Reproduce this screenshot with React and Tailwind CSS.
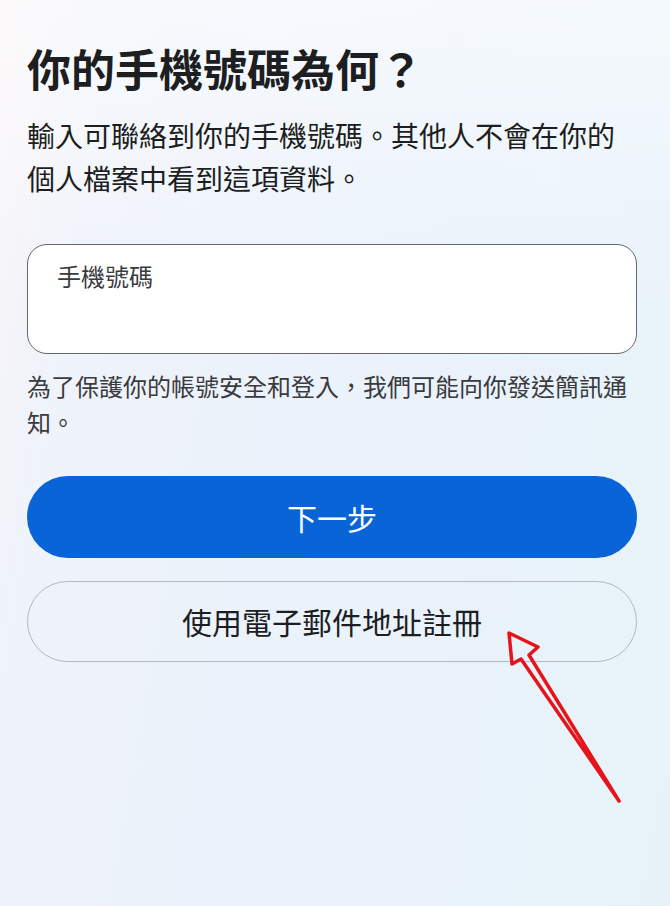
import React from "react";

const Arrow = () => (
  <svg
    className="pointer-events-none absolute left-0 top-0"
    width="670"
    height="906"
    viewBox="0 0 670 906"
  >
    <polygon
      points="509,633 538,647 529,655 619,801 521,659 512,664"
      fill="none"
      stroke="#e5141b"
      strokeWidth="3.5"
      strokeLinejoin="round"
    />
  </svg>
);

const App = () => {
  return (
    <div className="relative h-[906px] w-[670px] overflow-hidden bg-[linear-gradient(180deg,rgba(255,255,255,0.55)_0%,rgba(255,255,255,0)_35%),linear-gradient(100deg,#faf5f7_0%,#eff3fa_14%,#eaf2fb_55%,#e8f3f9_100%)] font-['Noto_Sans_CJK_TC','Noto_Sans',sans-serif] text-[#1c1e21]">
      <div className="ml-[27px] w-[610px] pt-[41px]">
        <h1 className="text-[44px] font-semibold leading-[54px]">你的手機號碼為何？</h1>
        <p className="mt-[19px] text-[28px] leading-[43px]">
          輸入可聯絡到你的手機號碼。其他人不會在你的個人檔案中看到這項資料。
        </p>

        {/* phone input */}
        <div className="mt-[44px] h-[110px] rounded-[20px] border-[1.5px] border-[#65676b] bg-white pl-[29px] pt-[15px]">
          <span className="text-[24px] leading-[32px] text-[#3a3b3e]">手機號碼</span>
        </div>

        <p className="mt-[14px] text-[24px] leading-[36px] text-[#3a3b3e]">
          為了保護你的帳號安全和登入，我們可能向你發送簡訊通知。
        </p>

        <button className="mt-[36px] flex h-[82px] w-full items-center justify-center rounded-full bg-[#0964d8] text-[30px] text-white">
          下一步
        </button>
        <button className="mt-[23px] flex h-[81px] w-full items-center justify-center rounded-full border border-[#b4b7bc] text-[30px] text-[#1c1e21]">
          使用電子郵件地址註冊
        </button>
      </div>

      <Arrow />
    </div>
  );
};

export default App;
